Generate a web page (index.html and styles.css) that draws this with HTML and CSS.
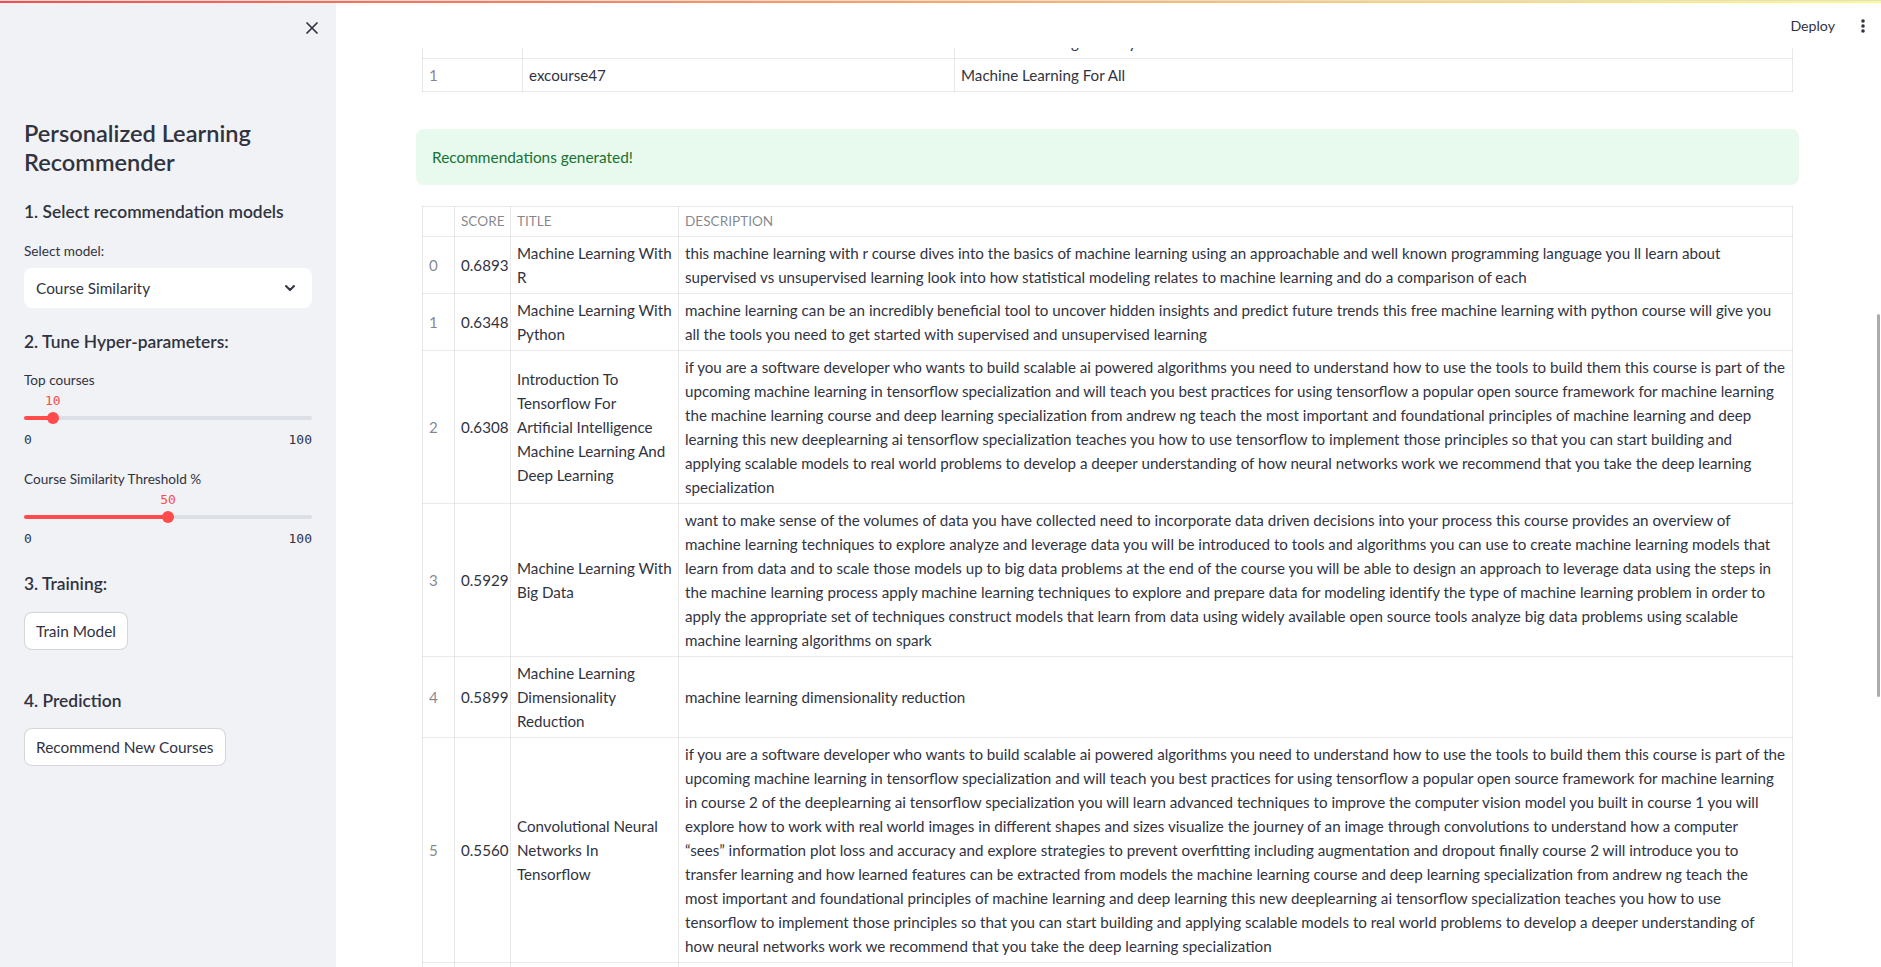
FILE: index.html
```html
<!DOCTYPE html>
<html lang="en">
<head>
<meta charset="utf-8">
<title>Personalized Learning Recommender</title>
<link rel="stylesheet" href="styles.css">
</head>
<body>
<div class="decoration"></div>
<header class="topbar">
  <span class="deploy">Deploy</span>
  <svg class="kebab" width="4" height="14" viewBox="0 0 4 14" aria-hidden="true"><circle cx="2" cy="2" r="1.8"/><circle cx="2" cy="7" r="1.8"/><circle cx="2" cy="12" r="1.8"/></svg>
</header>
<div class="app">
  <aside class="sidebar">
    <div class="sb-top">
      <button class="close-btn" aria-label="Close sidebar">
        <svg width="12" height="12" viewBox="0 0 12 12"><path d="M1 1 L11 11 M11 1 L1 11" stroke="#31333f" stroke-width="1.7" fill="none" stroke-linecap="round"/></svg>
      </button>
    </div>
    <h1 class="sb-title">Personalized Learning Recommender</h1>
    <h3 class="sb-h3 h-first">1. Select recommendation models</h3>
    <div class="sb-label l-select">Select model:</div>
    <div class="select">
      <span>Course Similarity</span>
      <svg width="12" height="12" viewBox="0 0 12 12"><path d="M2 4 L6 8 L10 4" stroke="#31333f" stroke-width="2" fill="none" stroke-linecap="round" stroke-linejoin="round"/></svg>
    </div>
    <h3 class="sb-h3 h-tune">2. Tune Hyper-parameters:</h3>
    <div class="slider s-first">
      <div class="sb-label">Top courses</div>
      <div class="slider-value-row"><span class="slider-value" style="left:10%">10</span></div>
      <div class="slider-track"><div class="track-bg"></div><div class="track-fill" style="width:10%"></div><div class="thumb" style="left:10%"></div></div>
      <div class="ticks"><span>0</span><span>100</span></div>
    </div>
    <div class="slider s-second">
      <div class="sb-label">Course Similarity Threshold %</div>
      <div class="slider-value-row"><span class="slider-value" style="left:50%">50</span></div>
      <div class="slider-track"><div class="track-bg"></div><div class="track-fill" style="width:50%"></div><div class="thumb" style="left:50%"></div></div>
      <div class="ticks"><span>0</span><span>100</span></div>
    </div>
    <h3 class="sb-h3 h-train">3. Training:</h3>
    <button class="btn b-train">Train Model</button>
    <h3 class="sb-h3 h-pred">4. Prediction</h3>
    <button class="btn b-pred">Recommend New Courses</button>
  </aside>

  <main class="main">
    <table class="df df-top">
      <colgroup><col class="c-idx-top"><col class="c-id"><col></colgroup>
      <tbody>
        <tr><td class="idx">0</td><td>ML0101ENv3</td><td>Machine Learning With Python</td></tr>
        <tr><td class="idx">1</td><td>excourse47</td><td>Machine Learning For All</td></tr>
      </tbody>
    </table>

    <div class="alert-success">Recommendations generated!</div>

    <table class="df df-rec">
      <colgroup><col class="c-idx"><col class="c-score"><col class="c-title"><col></colgroup>
      <thead>
        <tr><th></th><th>Score</th><th>Title</th><th>Description</th></tr>
      </thead>
      <tbody>
        <tr>
          <td class="idx">0</td><td>0.6893</td><td class="title">Machine Learning With R</td>
          <td>this machine learning with r course dives into the basics of machine learning using an approachable and well known programming language you ll learn about supervised vs unsupervised learning look into how statistical modeling relates to machine learning and do a comparison of each</td>
        </tr>
        <tr>
          <td class="idx">1</td><td>0.6348</td><td class="title">Machine Learning With Python</td>
          <td>machine learning can be an incredibly beneficial tool to uncover hidden insights and predict future trends this free machine learning with python course will give you all the tools you need to get started with supervised and unsupervised learning</td>
        </tr>
        <tr>
          <td class="idx">2</td><td>0.6308</td><td class="title">Introduction To Tensorflow For Artificial Intelligence Machine Learning And Deep Learning</td>
          <td>if you are a software developer who wants to build scalable ai powered algorithms you need to understand how to use the tools to build them this course is part of the upcoming machine learning in tensorflow specialization and will teach you best practices for using tensorflow a popular open source framework for machine learning the machine learning course and deep learning specialization from andrew ng teach the most important and foundational principles of machine learning and deep learning this new deeplearning ai tensorflow specialization teaches you how to use tensorflow to implement those principles so that you can start building and applying scalable models to real world problems to develop a deeper understanding of how neural networks work we recommend that you take the deep learning specialization</td>
        </tr>
        <tr>
          <td class="idx">3</td><td>0.5929</td><td class="title">Machine Learning With Big Data</td>
          <td>want to make sense of the volumes of data you have collected need to incorporate data driven decisions into your process this course provides an overview of machine learning techniques to explore analyze and leverage data you will be introduced to tools and algorithms you can use to create machine learning models that learn from data and to scale those models up to big data problems at the end of the course you will be able to design an approach to leverage data using the steps in the machine learning process apply machine learning techniques to explore and prepare data for modeling identify the type of machine learning problem in order to apply the appropriate set of techniques construct models that learn from data using widely available open source tools analyze big data problems using scalable machine learning algorithms on spark</td>
        </tr>
        <tr>
          <td class="idx">4</td><td>0.5899</td><td class="title">Machine Learning Dimensionality Reduction</td>
          <td>machine learning dimensionality reduction</td>
        </tr>
        <tr>
          <td class="idx">5</td><td>0.5560</td><td class="title">Convolutional Neural Networks In Tensorflow</td>
          <td>if you are a software developer who wants to build scalable ai powered algorithms you need to understand how to use the tools to build them this course is part of the upcoming machine learning in tensorflow specialization and will teach you best practices for using tensorflow a popular open source framework for machine learning in course 2 of the deeplearning ai tensorflow specialization you will learn advanced techniques to improve the computer vision model you built in course 1 you will explore how to work with real world images in different shapes and sizes visualize the journey of an image through convolutions to understand how a computer “sees”&nbsp;information plot loss and accuracy and explore strategies to prevent overfitting including augmentation and dropout finally course 2 will introduce you to transfer learning and how learned features can be extracted from models the machine learning course and deep learning specialization from andrew ng teach the most&nbsp;important and foundational principles of machine learning and deep learning this new deeplearning ai tensorflow specialization teaches you how to use tensorflow to implement those principles so that you can start building and applying scalable models to real world problems to develop a deeper understanding of how neural networks work we recommend that you take the deep learning specialization</td>
        </tr>
        <tr><td class="idx">&nbsp;</td><td>&nbsp;</td><td>&nbsp;</td><td>&nbsp;</td></tr>
      </tbody>
    </table>
  </main>
</div>
<div class="scroll-thumb"></div>
</body>
</html>
```

FILE: styles.css
```css
* { box-sizing: border-box; }

html, body {
  margin: 0;
  height: 100%;
}

body {
  font-family: Lato, "Liberation Sans", sans-serif;
  font-size: 15.16px;
  color: #31333f;
  background: #ffffff;
  overflow: hidden;
}

.decoration {
  position: fixed;
  top: 0;
  left: 0;
  right: 0;
  height: 3px;
  border-top: 1px solid #dedede;
  background: linear-gradient(90deg, #ff4b4b, #fffd80);
  z-index: 20;
}

.topbar {
  position: fixed;
  top: 0;
  left: 336px;
  right: 0;
  height: 48px;
  background: #ffffff;
  display: flex;
  justify-content: flex-end;
  align-items: flex-start;
  padding: 16px 16px 0 0;
  z-index: 10;
}

.deploy {
  font-size: 14.2px;
  line-height: 20px;
  margin-right: 26px;
}

.kebab {
  fill: #31333f;
  margin-top: 3px;
}

.app {
  display: flex;
  height: 100vh;
}

/* ---------- sidebar ---------- */
.sidebar {
  width: 336px;
  flex: none;
  background: #f0f2f6;
  padding: 0 24px;
  display: flex;
  flex-direction: column;
  align-items: stretch;
  z-index: 15;
}

.sb-top {
  height: 119px;
  display: flex;
  justify-content: flex-end;
  align-items: flex-start;
  padding-top: 22px;
  margin-right: -6px;
}

.close-btn {
  width: 12px;
  height: 12px;
  padding: 0;
  border: 0;
  background: none;
  display: flex;
}

.sb-title {
  margin: 0;
  font-size: 23.6px;
  line-height: 29px;
  font-weight: 600;
}

.sb-h3 {
  margin: 0;
  font-size: 17.4px;
  line-height: 24px;
  font-weight: 600;
}

.h-first { margin-top: 23px; }
.h-tune { margin-top: 22px; }
.h-train { margin-top: 23px; }
.h-pred { margin-top: 39px; }

.sb-label {
  font-size: 13.6px;
  line-height: 20px;
}

.l-select { margin-top: 17px; }

.select {
  margin-top: 7px;
  height: 40px;
  background: #ffffff;
  border-radius: 8px;
  padding: 0 16px 0 12px;
  display: flex;
  align-items: center;
  justify-content: space-between;
  font-size: 15.4px;
}

.slider { display: flex; flex-direction: column; }
.s-first { margin-top: 16px; }
.s-second { margin-top: 19px; }

.slider-value-row {
  position: relative;
  height: 20px;
  margin-top: 1px;
}

.slider-value {
  position: absolute;
  top: 0;
  transform: translateX(-50%);
  font-family: "DejaVu Sans Mono", "Liberation Mono", monospace;
  font-size: 13px;
  line-height: 20px;
  color: #ff4b4b;
}

.slider-track {
  position: relative;
  height: 14px;
}

.track-bg,
.track-fill {
  position: absolute;
  left: 0;
  top: 5px;
  height: 4px;
  border-radius: 2px;
}

.track-bg {
  right: 0;
  background: #dcdfe6;
}

.track-fill { background: #ff4b4b; }

.thumb {
  position: absolute;
  top: 1px;
  width: 12px;
  height: 12px;
  margin-left: -6px;
  border-radius: 50%;
  background: #ff4b4b;
}

.ticks {
  margin-top: 5px;
  height: 20px;
  display: flex;
  justify-content: space-between;
  font-family: "DejaVu Sans Mono", "Liberation Mono", monospace;
  font-size: 13px;
  line-height: 20px;
  color: #31333f;
}

.btn {
  align-self: flex-start;
  height: 38px;
  padding: 0 11px;
  border: 1px solid rgba(49, 51, 63, 0.2);
  border-radius: 8px;
  background: #ffffff;
  color: #31333f;
  font-family: inherit;
  font-size: 15.4px;
}

.b-train { margin-top: 16px; }
.b-pred { margin-top: 15px; }

/* ---------- main ---------- */
.main {
  flex: 1;
  min-width: 0;
  padding: 25px 82px 0 80px;
  overflow: hidden;
}

.df {
  width: calc(100% - 12px);
  margin: 0 6px;
  border-collapse: collapse;
  table-layout: fixed;
  border: 1px solid rgba(49, 51, 63, 0.1);
}

.df td,
.df th {
  border: 1px solid rgba(49, 51, 63, 0.1);
  padding: 4px 6px;
  line-height: 24px;
  vertical-align: middle;
  text-align: left;
  font-weight: 400;
}

.df td.title { padding-right: 5px; }

.df th {
  font-size: 13.6px;
  line-height: 21px;
  text-transform: uppercase;
  color: rgba(49, 51, 63, 0.6);
}

.df .idx { color: rgba(49, 51, 63, 0.6); }

.c-idx-top { width: 100px; }
.c-id { width: 432px; }

.c-idx { width: 32px; }
.c-score { width: 56px; }
.c-title { width: 168px; }

.alert-success {
  margin-top: 37px;
  padding: 16px;
  border-radius: 8px;
  background: #e8f9ee;
  color: #177233;
  font-size: 15.4px;
  line-height: 24px;
}

.df-rec { margin-top: 21px; }

.scroll-thumb {
  position: fixed;
  right: 1px;
  top: 314px;
  width: 3px;
  height: 383px;
  border-radius: 2px;
  background: #acacb0;
  z-index: 30;
}
```
